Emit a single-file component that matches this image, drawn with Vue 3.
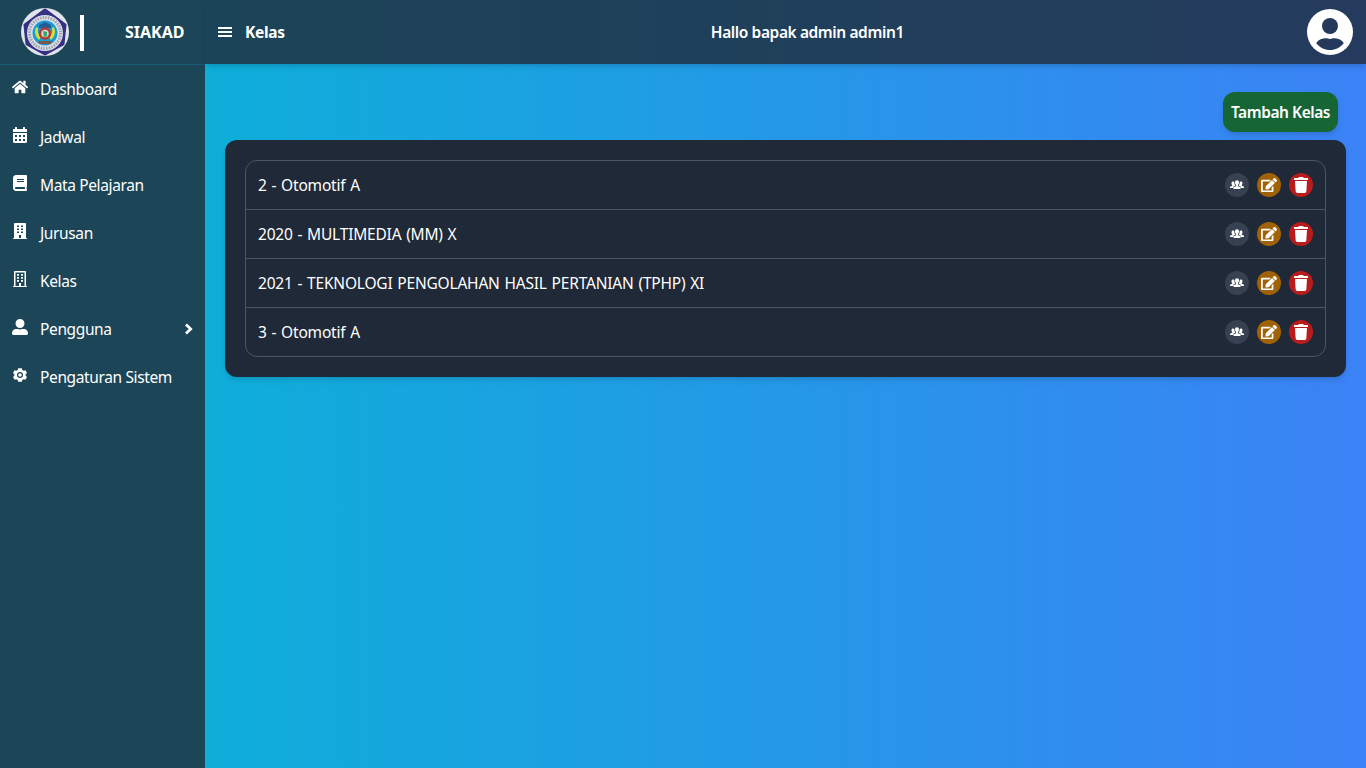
<script setup>
const menu = [
  { name: 'Dashboard', box: '0 0 576 512', d: 'M280.37 148.26L96 300.11V464a16 16 0 0 0 16 16l112.06-.29a16 16 0 0 0 15.92-16V368a16 16 0 0 1 16-16h64a16 16 0 0 1 16 16v95.64a16 16 0 0 0 16 16.05L464 480a16 16 0 0 0 16-16V300L295.67 148.26a12.19 12.19 0 0 0-15.3 0zM571.6 251.47L488 182.56V44.05a12 12 0 0 0-12-12h-56a12 12 0 0 0-12 12v72.61L318.47 43a48 48 0 0 0-61 0L4.34 251.47a12 12 0 0 0-1.6 16.9l25.5 31A12 12 0 0 0 45.15 301l235.22-193.74a12.19 12.19 0 0 1 15.3 0L530.9 301a12 12 0 0 0 16.9-1.6l25.5-31a12 12 0 0 0-1.7-16.93z' },
  { name: 'Jadwal', box: '0 0 512 512', d: 'M32 64h64V12q0-12 12-12h40q12 0 12 12v52h192V12q0-12 12-12h40q12 0 12 12v52h64v96H32zM32 192h448v272q0 48-48 48H80q-48 0-48-48zM96 256v64h64v-64zM224 256v64h64v-64zM352 256v64h64v-64zM96 384v64h64v-64zM224 384v64h64v-64zM352 384v64h64v-64z' },
  { name: 'Mata Pelajaran', box: '-32 0 512 512', d: 'M448 360V24c0-13.3-10.7-24-24-24H96C43 0 0 43 0 96v320c0 53 43 96 96 96h328c13.3 0 24-10.7 24-24v-16c0-7.5-3.5-14.3-8.9-18.7-4.2-15.4-4.2-59.3 0-74.7 5.4-4.3 8.9-11.1 8.9-18.6zM128 134c0-3.3 2.7-6 6-6h212c3.3 0 6 2.7 6 6v20c0 3.3-2.7 6-6 6H134c-3.3 0-6-2.7-6-6v-20zm0 64c0-3.3 2.7-6 6-6h212c3.3 0 6 2.7 6 6v20c0 3.3-2.7 6-6 6H134c-3.3 0-6-2.7-6-6v-20zm253.4 250H96c-17.7 0-32-14.3-32-32 0-17.6 14.4-32 32-32h285.4c-1.9 17.1-1.9 46.9 0 64z' },
  { name: 'Jurusan', box: '-32 0 512 512', d: 'M436 480h-20V24q0-24-24-24H56Q32 0 32 24v456H12q-12 0-12 12v20h448v-20q0-12-12-12zM128 76h64v52h-64zM256 76h64v52h-64zM128 172h64v52h-64zM256 172h64v52h-64zM128 268h64v52h-64zM256 268h64v52h-64zM192 384h64v96h-64z' },
  { name: 'Kelas', box: '-32 0 512 512', d: 'M436 480h-20V24q0-24-24-24H56Q32 0 32 24v456H12q-12 0-12 12v20h448v-20q0-12-12-12zM80 48h288v432H256v-96h-64v96H80zM128 96v56h64V96zM256 96v56h64V96zM128 192v56h64v-56zM256 192v56h64v-56zM128 288v56h64v-56zM256 288v56h64v-56z' },
  { name: 'Pengguna', box: '0 0 512 512', arrow: true, d: 'M256 288c79.5 0 144-64.5 144-144S335.5 0 256 0 112 64.5 112 144s64.5 144 144 144zm128 32h-55.1c-22.2 10.2-46.9 16-72.9 16s-50.6-5.8-72.9-16H128C57.3 320 0 377.3 0 448v16c0 26.5 21.5 48 48 48h416c26.5 0 48-21.5 48-48v-16c0-70.7-57.3-128-128-128z' },
  { name: 'Pengaturan Sistem', box: '0 0 16 16', d: 'M6.200 1.200h3.600l.5 1.800 1.200.7 1.900-.5 1.600 2.700-1.300 1.300v1.600l1.300 1.300-1.600 2.700-1.900-.5-1.200.7-.5 1.800H6.200L5.700 13l-1.200-.7-1.900.5L1 10.100l1.300-1.300V7.200L1 5.900l1.600-2.700 1.900.5L5.700 3zM8 5a3 3 0 1 0 0 6a3 3 0 1 0 0-6zM8 6.200a1.800 1.800 0 1 1 0 3.600a1.800 1.800 0 1 1 0-3.600z' },
]
const rows = ['2 - Otomotif A', '2020 - MULTIMEDIA (MM) X', '2021 - TEKNOLOGI PENGOLAHAN HASIL PERTANIAN (TPHP) XI', '3 - Otomotif A']
</script>

<template>
  <div class="page">
    <aside class="side">
      <div class="brand">
        <svg class="logo" viewBox="0 0 48 48">
          <circle cx="24" cy="24" r="24" fill="#e1e4ec" />
          <path d="M24 2l20 15-2 19-18 10L6 36 4 17z" fill="#352f85" stroke="#352f85" stroke-width="3" stroke-linejoin="round" />
          <circle cx="24" cy="25" r="18" fill="#dcdee4" />
          <circle cx="24" cy="25" r="15.500" fill="none" stroke="#a0a3b2" stroke-width="3" stroke-dasharray="1.500 1.200" />
          <circle cx="24" cy="25" r="12.500" fill="#159bd7" />
          <path d="M15 19q-3 8 3 13l2-3q-4-3-3-9zM33 19q3 8-3 13l-2-3q4-3 3-9z" fill="#d7df36" />
          <path d="M18 17l6-3 6 3v3H18z" fill="#225e91" />
          <circle cx="24" cy="25.500" r="5" fill="#c9dfd6" stroke="#b53b36" stroke-width="2.500" />
          <path d="M22 23l4 1v4l-3 1z" fill="#39a569" />
          <path d="M17 33h14l-1 3H18z" fill="#7b594c" />
        </svg>
        <i class="bar"></i>
        <b class="siakad">SIAKAD</b>
      </div>
      <nav>
        <div v-for="m in menu" :key="m.name" class="item">
          <svg class="mi" :viewBox="m.box"><path :d="m.d" fill="#fff" fill-rule="evenodd" /></svg>
          <span>{{ m.name }}</span>
          <svg v-if="m.arrow" class="arrow" viewBox="0 0 10 12"><path d="M2 1.500L6.700 6 2 10.500" fill="none" stroke="#fff" stroke-width="2.700" /></svg>
        </div>
      </nav>
    </aside>
    <div class="content">
      <header>
        <svg class="burger" viewBox="0 0 14 10"><path d="M0 0h14v2H0zM0 4h14v2H0zM0 8h14v2H0z" fill="#fff" /></svg>
        <b class="title">Kelas</b>
        <b class="hello">Hallo bapak admin admin1</b>
        <svg class="avatar" viewBox="0 0 46 46">
          <circle cx="23" cy="23" r="23" fill="#fff" />
          <circle cx="23" cy="17" r="8" fill="#25395d" />
          <path d="M9.200 34c2.300-3.500 6-4.700 9.800-4.700 2 0 2 .7 4 .7s2-.7 4-.7c3.800 0 7.500 1.200 9.800 4.700-3.500 4.700-8.300 7-13.800 7s-10.300-2.300-13.800-7z" fill="#25395d" />
        </svg>
      </header>
      <main>
        <button>Tambah Kelas</button>
        <section class="card">
          <div class="list">
            <div v-for="r in rows" :key="r" class="row">
              <span class="rt">{{ r }}</span>
              <span class="act gray"><svg width="14" height="14" viewBox="0 0 14 14"><path d="M7 2.300c1.300 0 2 .9 2 2.200 0 1.200-.5 2-1.100 2.600v1.100l2.600 1V11h-7V9.200l2.600-1V7.100C5.500 6.500 5 5.700 5 4.500c0-1.300.7-2.200 2-2.200zM3 3.400c.6 0 1.100.2 1.300.6 0 1.600.3 2.600.9 3.300v.5l-2 .9V10H0V8.700l2.200-.9V7c-1-1-1.100-3.600.8-3.600zM11 3.400c-.6 0-1.100.2-1.300.6 0 1.600-.3 2.600-.9 3.300v.5l2 .9V10H14V8.700l-2.200-.9V7c1-1 1.100-3.600-.8-3.600z" fill="#fff" /></svg></span>
              <span class="act amber"><svg width="16" height="14.200" viewBox="0 0 576 512"><path d="M402.600 83.200l90.200 90.200c3.800 3.800 3.800 10 0 13.800L274.400 405.600l-92.800 10.300c-12.400 1.400-22.900-9.100-21.500-21.500l10.300-92.800L388.800 83.200c3.800-3.800 10-3.800 13.800 0zm162-22.900l-48.800-48.800c-15.200-15.200-39.900-15.200-55.200 0l-35.400 35.400c-3.800 3.800-3.800 10 0 13.800l90.200 90.200c3.800 3.800 10 3.800 13.800 0l35.400-35.400c15.200-15.300 15.200-40 0-55.200zM384 346.200V448H64V128h229.800c3.200 0 6.200-1.300 8.500-3.500l40-40c7.600-7.600 2.200-20.500-8.500-20.500H48C21.500 64 0 85.500 0 112v352c0 26.500 21.500 48 48 48h352c26.500 0 48-21.500 48-48V306.200c0-10.700-12.900-16-20.500-8.500l-40 40c-2.200 2.300-3.500 5.300-3.500 8.500z" fill="#fff" /></svg></span>
              <span class="act red"><svg width="14" height="16" viewBox="0 0 448 512"><path d="M432 32H312l-9.400-18.700A24 24 0 0 0 281.100 0H166.800a23.720 23.720 0 0 0-21.400 13.300L136 32H16A16 16 0 0 0 0 48v32a16 16 0 0 0 16 16h416a16 16 0 0 0 16-16V48a16 16 0 0 0-16-16zM53.200 467a48 48 0 0 0 47.900 45h245.800a48 48 0 0 0 47.900-45L416 128H32z" fill="#fff" /></svg></span>
            </div>
          </div>
        </section>
      </main>
    </div>
  </div>
</template>

<style scoped>
.page { display: flex; width: 100vw; height: 100vh; overflow: hidden; background: linear-gradient(to right, #06b6d4, #3b82f6); font: 15.5px/24px "Noto Sans", "Open Sans", sans-serif; color: #fff; }
.page * { box-sizing: border-box; }
b { font-weight: 600; }
.side { width: 205px; flex: none; background: #1c4557; }
.brand { display: flex; align-items: center; height: 65px; padding-left: 21px; border-bottom: 1px solid #155e75; }
.logo { width: 48px; height: 48px; }
.bar { width: 4px; height: 36px; margin: 2px 0 0 11px; background: #fff; }
.siakad { margin-left: 41px; font-size: 16px; font-weight: 700; }
.item { display: flex; height: 48px; align-items: center; padding: 0 12px; white-space: nowrap; }
.item span { margin-left: 12px; flex: 1; letter-spacing: -0.37px; }
.mi { width: 16px; height: 16px; flex: none; margin-top: -4px; }
.arrow { width: 10px; height: 12px; margin-right: -1px; }
.content { flex: 1; }
header { display: flex; align-items: center; height: 64px; padding: 0 13px; background: rgba(31, 41, 55, 0.8); box-shadow: 0 4px 6px -1px rgba(0,0,0,.1), 0 2px 4px -2px rgba(0,0,0,.1); }
.burger { width: 14px; height: 10px; }
.title { margin-left: 13px; font-weight: 700; letter-spacing: -0.3px; }
.hello { flex: 1; padding-left: 23px; text-align: center; letter-spacing: -0.4px; }
.avatar { width: 46px; height: 46px; }
main { display: flex; flex-direction: column; padding: 28px 20px; }
button { align-self: flex-end; width: 115px; height: 40px; margin-right: 8px; padding: 0; border: 0; border-radius: 12px; background: #166534; color: #fff; font: inherit; font-weight: 600; letter-spacing: -0.45px; white-space: nowrap; box-shadow: 0 4px 6px -1px rgba(0,0,0,.1), 0 2px 4px -2px rgba(0,0,0,.1); }
.card { margin-top: 8px; padding: 20px; border-radius: 12px; background: #1f2937; box-shadow: 0 4px 6px -1px rgba(0,0,0,.1), 0 2px 4px -2px rgba(0,0,0,.1); }
.list { border: 1px solid #4b5563; border-radius: 12px; }
.row { display: flex; align-items: center; gap: 8px; height: 49px; padding: 0 12px; border-bottom: 1px solid #4b5563; }
.row:last-child { height: 48px; border-bottom: 0; }
.rt { flex: 1; white-space: nowrap; letter-spacing: -0.2px; word-spacing: 1px; }
.act { display: flex; width: 24px; height: 24px; align-items: center; justify-content: center; border-radius: 50%; }
.gray { background: #374151; }
.amber { background: #a16207; }
.red { background: #b91c1c; }
</style>
